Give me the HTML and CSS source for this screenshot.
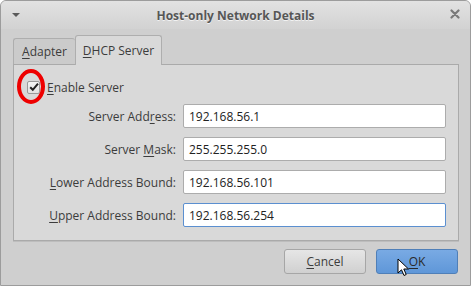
FILE: index.html
```html
<!DOCTYPE html>
<html>
<head>
<meta charset="utf-8">
<link rel="stylesheet" href="styles.css">
</head>
<body>
<div class="window">
  <div class="titlebar">
    <svg class="menu-arrow" width="10" height="6" viewBox="0 0 10 6"><path d="M1 1 L9 1 L5 5 Z" fill="#5a5a5a"/></svg>
    <div class="title">Host-only Network Details</div>
    <svg class="close" width="10" height="10" viewBox="0 0 10 10"><path d="M1.5 1.5 L8.5 8.5 M8.5 1.5 L1.5 8.5" stroke="#7a7a7a" stroke-width="2.2" stroke-linecap="round"/></svg>
  </div>
  <div class="body">
    <div class="tabs">
      <div class="tab"><span><u>A</u>dapter</span></div>
      <div class="tab active"><span><u>D</u>HCP Server</span></div>
    </div>
    <div class="panel">
      <div class="check-row">
        <span class="checkbox">
          <svg width="12" height="12" viewBox="0 0 12 12"><path d="M2.2 6.2 L4.8 8.8 L10 2.6" fill="none" stroke="#222" stroke-width="2"/></svg>
        </span>
        <span class="check-label"><u>E</u>nable Server</span>
        <span class="highlight"></span>
      </div>
      <div class="form">
        <label>Server Add<u>r</u>ess:</label>
        <div class="input">192.168.56.1</div>
        <label>Server <u>M</u>ask:</label>
        <div class="input">255.255.255.0</div>
        <label><u>L</u>ower Address Bound:</label>
        <div class="input">192.168.56.101</div>
        <label><u>U</u>pper Address Bound:</label>
        <div class="input focus">192.168.56.254</div>
      </div>
    </div>
    <div class="buttons">
      <div class="btn"><span><u>C</u>ancel</span></div>
      <div class="btn primary"><span><u>O</u>K</span>
        <svg class="cursor" width="14" height="20" viewBox="0 0 14 20"><path d="M1 1 L1 15 L4.5 11.8 L7 17.5 L9.2 16.5 L6.8 11 L11.5 11 Z" fill="#fff" stroke="#000" stroke-width="1" stroke-linejoin="round"/></svg>
      </div>
    </div>
  </div>
</div>
</body>
</html>
```
FILE: styles.css
```css
html, body {
  margin: 0;
  padding: 0;
  background: #ffffff;
}
body {
  font-family: "Open Sans", "DejaVu Sans", sans-serif;
  font-size: 12px;
  color: #3c3c3c;
}
u {
  text-decoration: underline;
  text-underline-offset: 2px;
}
.window {
  box-sizing: border-box;
  width: 471px;
  height: 286px;
  border: 1px solid #9c9c9c;
  border-radius: 6px 6px 0 0;
  background: #cfcfcf;
  display: flex;
  flex-direction: column;
  overflow: hidden;
}
.titlebar {
  position: relative;
  height: 28px;
  flex: none;
  display: flex;
  align-items: center;
  justify-content: center;
  background: linear-gradient(#e2e2e2, #d2d2d2);
}
.menu-arrow {
  position: absolute;
  left: 10px;
  top: 11px;
}
.close {
  position: absolute;
  right: 10px;
  top: 8px;
}
.title {
  font-weight: bold;
  font-size: 12px;
  color: #565656;
  text-shadow: 0 1px 0 #f2f2f2;
}
.body {
  flex: 1;
  display: flex;
  flex-direction: column;
  padding: 6px 11px 0 12px;
}
.tabs {
  display: flex;
  align-items: flex-end;
  height: 29px;
  position: relative;
  z-index: 1;
}
.tab {
  box-sizing: border-box;
  height: 26px;
  display: flex;
  align-items: center;
  justify-content: center;
  white-space: nowrap;
  border: 1px solid #aeaeae;
  border-bottom: none;
  border-radius: 3px 3px 0 0;
  background: #cbcbcb;
  color: #3c3c3c;
}
.tab:first-child {
  width: 62px;
  border-right: none;
}
.tab.active {
  height: 30px;
  width: 87px;
  background: #d9d9d9;
  margin-bottom: -1px;
  padding-bottom: 1px;
}
.panel {
  box-sizing: border-box;
  height: 177px;
  background: #d9d9d9;
  border: 1px solid #aaaaaa;
  box-shadow: 0 1px 0 #bdbdbd;
  padding: 14px 12px 0 13px;
}
.check-row {
  position: relative;
  display: flex;
  align-items: center;
  height: 16px;
}
.checkbox {
  box-sizing: border-box;
  width: 13px;
  height: 13px;
  border: 1px solid #9a9a9a;
  border-radius: 2px;
  background: linear-gradient(#f4f4f4, #e2e2e2);
  display: flex;
  align-items: center;
  justify-content: center;
}
.checkbox svg {
  flex: none;
}
.check-label {
  margin-left: 7px;
}
.highlight {
  position: absolute;
  left: -10px;
  top: -10px;
  width: 20px;
  height: 27px;
  border: 4px solid #ee0000;
  border-radius: 50%;
}
.form {
  margin-top: 9px;
  display: grid;
  grid-template-columns: 149px 263px;
  column-gap: 7px;
  row-gap: 9px;
  align-items: center;
}
.form label {
  text-align: right;
  white-space: nowrap;
  color: #3c3c3c;
}
.input {
  box-sizing: border-box;
  height: 24px;
  padding: 0 5px;
  display: flex;
  align-items: center;
  background: #ffffff;
  border: 1px solid #acacac;
  border-radius: 2px;
  color: #222;
}
.input.focus {
  border-color: #5b8fd0;
}
.buttons {
  display: flex;
  justify-content: flex-end;
  gap: 10px;
  margin-top: 8px;
  padding-right: 1px;
}
.btn {
  box-sizing: border-box;
  width: 82px;
  height: 25px;
  display: flex;
  align-items: center;
  justify-content: center;
  white-space: nowrap;
  border: 1px solid #a6a6a6;
  border-radius: 3px;
  background: linear-gradient(#e6e6e6, #d0d0d0);
  color: #3c3c3c;
}
.btn.primary {
  position: relative;
  background: linear-gradient(#79aae4, #5f97d8);
  border-color: #4f7fb8;
  color: #2a2a2a;
}
.cursor {
  position: absolute;
  left: 20px;
  top: 8px;
}
```
